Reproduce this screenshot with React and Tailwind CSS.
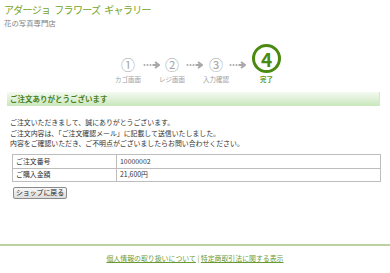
import React from 'react';

const font = { fontFamily: '"Noto Sans CJK JP", "Noto Sans", sans-serif' };

function Arrow({ className }) {
  return (
    <svg width="17" height="8" viewBox="0 0 17 8" className={className}>
      <circle cx="1.5" cy="4" r="1" fill="#a8a8a8" />
      <circle cx="4.5" cy="4" r="1" fill="#a8a8a8" />
      <circle cx="7.5" cy="4" r="1" fill="#a8a8a8" />
      <path d="M9.5 4 H15" stroke="#a8a8a8" strokeWidth="2" />
      <path d="M12 1 L16 4 L12 7" stroke="#a8a8a8" strokeWidth="2" fill="none" />
    </svg>
  );
}

function Step({ num, label }) {
  return (
    <div className="flex w-[20px] flex-col items-center">
      <div className="text-[14px] leading-[13px] text-[#a8a8a8]">{num}</div>
      <div className="mt-[4px] whitespace-nowrap text-[6.5px] leading-[8px] text-[#a0a0a0]">{label}</div>
    </div>
  );
}

export default function App() {
  return (
    <div className="h-[273px] w-[390px] overflow-hidden bg-white" style={font}>
      {/* Site title */}
      <div className="pl-[4px] pt-[3px]">
        <div className="flex gap-[4px] whitespace-nowrap text-[10px] leading-[13px] tracking-[-0.7px] text-[#72a327]">
          <span>アダージョ</span>
          <span>フラワーズ</span>
          <span>ギャラリー</span>
        </div>
        <div className="mt-[2px] text-[7.4px] leading-[9px] text-[#808080]">花の写真専門店</div>
      </div>

      {/* Steps */}
      <div className="ml-[118px] mt-[17px] flex items-end">
        <Step num="①" label="カゴ画面" />
        <Arrow className="mb-[14px] ml-[5px]" />
        <div className="ml-[2px]">
          <Step num="②" label="レジ画面" />
        </div>
        <Arrow className="mb-[14px] ml-[4px]" />
        <div className="ml-[3px]">
          <Step num="③" label="入力確認" />
        </div>
        <Arrow className="mb-[14px] ml-[3px]" />
        <div className="ml-[6px] flex flex-col items-center">
          <div className="flex h-[29px] w-[29px] items-center justify-center rounded-full border-[3px] border-[#4b8a10] text-[19px] font-bold leading-none text-[#4b8a10]">
            4
          </div>
          <div className="mt-[2px] text-[6.5px] font-bold leading-[8px] text-[#5f9a22]">完了</div>
        </div>
      </div>

      {/* Thanks bar */}
      <div className="ml-[7px] mt-[9px] flex h-[14px] w-[373px] items-center border-r border-[#d8e4d0] bg-gradient-to-b from-[#f4faf1] to-[#c9e7bd] pl-[3px]">
        <span className="text-[7.5px] font-bold leading-none text-[#4d7f1c]">ご注文ありがとうございます</span>
      </div>

      {/* Message */}
      <div className="ml-[10px] mt-[11px] text-[6.9px] leading-[10.5px] text-[#333]">
        <p>ご注文いただきまして、誠にありがとうございます。</p>
        <p>ご注文内容は、「ご注文確認メール」に記載して送信いたしました。</p>
        <p>内容をご確認いただき、ご不明点がございましたらお問い合わせください。</p>
      </div>

      {/* Order table */}
      <table className="ml-[12px] mt-[5px] w-[369px] border-collapse text-[6.9px] leading-none text-[#333]">
        <tbody>
          <tr className="h-[14px]">
            <td className="w-[104px] border border-[#bdbdbd] pl-[3px]">ご注文番号</td>
            <td className="border border-[#bdbdbd] pl-[3px]">10000002</td>
          </tr>
          <tr className="h-[13px]">
            <td className="border border-[#bdbdbd] pl-[3px]">ご購入金額</td>
            <td className="border border-[#bdbdbd] pl-[3px]">21,600円</td>
          </tr>
        </tbody>
      </table>

      <button className="ml-[13px] mt-[5px] flex h-[12px] w-[54px] items-center justify-center rounded-[2px] border border-[#8a8a8a] bg-gradient-to-b from-[#f8f8f8] to-[#dcdcdc] text-[6.9px] leading-none text-[#222]">
        ショップに戻る
      </button>

      {/* Footer */}
      <div className="mt-[45px] h-[2px] w-full bg-[#bcd1a2]" />
      <div className="mt-[7px] text-center text-[6.9px] leading-[10px] text-[#6b9a35]">
        <a className="underline">個人情報の取り扱いについて</a>
        <span> | </span>
        <a className="underline">特定商取引法に関する表示</a>
      </div>
    </div>
  );
}
